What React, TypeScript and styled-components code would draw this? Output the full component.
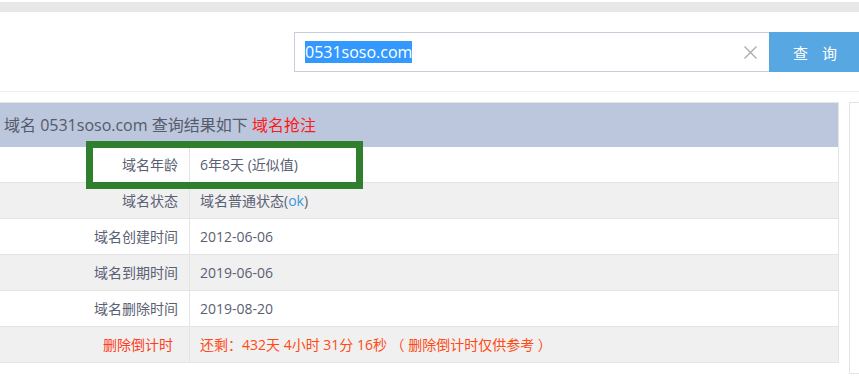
import React from "react";
import styled, { createGlobalStyle } from "styled-components";

const GlobalStyle = createGlobalStyle`
  html, body {
    margin: 0;
    padding: 0;
    background: #ffffff;
  }
  body {
    font-family: "Open Sans", "Noto Sans CJK SC", "Liberation Sans", sans-serif;
    color: #555;
    overflow: hidden;
  }
`;

const Page = styled.div`
  width: 859px;
  padding-top: 2px;
`;

const TopStrip = styled.div`
  height: 10px;
  background: #e7e7e7;
`;

const SearchBar = styled.div`
  height: 80px;
  box-sizing: border-box;
  padding: 20px 0 20px 294px;
  border-bottom: 1px solid #eeeeee;
  display: flex;
`;

const InputBox = styled.div`
  width: 475px;
  height: 40px;
  box-sizing: border-box;
  border: 1px solid #c8cedb;
  border-right: none;
  display: flex;
  align-items: center;
  padding: 0 12px 0 10px;
  background: #fff;
`;

const InputText = styled.div`
  flex: 1;
  font-size: 16px;
  line-height: 21px;
  color: #333;
`;

const Selected = styled.span`
  background: #3399ff;
  color: #ffffff;
`;

const ClearIcon = styled.svg`
  width: 13px;
  height: 13px;
  flex-shrink: 0;
`;

const SearchButton = styled.button`
  width: 90px;
  height: 40px;
  border: none;
  margin: 0;
  padding: 0 0 0 2px;
  background: #56a7e2;
  color: #ffffff;
  font-family: "Noto Sans CJK SC", sans-serif;
  font-size: 15px;
  display: flex;
  align-items: center;
  justify-content: center;
  gap: 14px;
  cursor: pointer;
`;

const Content = styled.div`
  margin-top: 10px;
  display: flex;
  align-items: flex-start;
  gap: 10px;
`;

const TableWrap = styled.div`
  position: relative;
  width: 839px;
  flex-shrink: 0;
  box-sizing: border-box;
  border-top: 1px solid #e4e4e4;
  border-right: 1px solid #e4e4e4;
`;

const Header = styled.div`
  height: 44px;
  line-height: 44px;
  background: #bcc6dd;
  padding-left: 4px;
  font-size: 16px;
  color: #555b6b;
  white-space: nowrap;
`;

const Red = styled.span`
  color: #ff1a1a;
`;

const Row = styled.div<{ $alt?: boolean }>`
  display: grid;
  grid-template-columns: 190px 1fr;
  height: 36px;
  box-sizing: border-box;
  border-bottom: 1px solid #e4e4e4;
  background: ${(p) => (p.$alt ? "#f0f0f0" : "#ffffff")};
  font-size: 14px;
`;

const Label = styled.div<{ $warn?: boolean }>`
  border-right: 1px solid #e4e4e4;
  text-align: right;
  padding-right: ${(p) => (p.$warn ? "16px" : "11px")};
  line-height: 35px;
  color: ${(p) => (p.$warn ? "#ff3d1f" : "#5a6072")};
`;

const Value = styled.div<{ $warn?: boolean }>`
  padding-left: 10px;
  line-height: 35px;
  white-space: nowrap;
  color: ${(p) => (p.$warn ? "#ff4a14" : "#5a6072")};
`;

const Link = styled.span`
  color: #3b96dc;
`;

const Highlight = styled.div`
  position: absolute;
  left: 86px;
  top: 38px;
  width: 277px;
  height: 48px;
  box-sizing: border-box;
  border: 7px solid #2f7f2f;
  pointer-events: none;
`;

const SidePanel = styled.div`
  flex: 1;
  height: 272px;
  box-sizing: border-box;
  border: 1px solid #e4e4e4;
  border-right: none;
`;

const rows: { label: string; value: React.ReactNode; warn?: boolean }[] = [
  { label: "域名年龄", value: "6年8天 (近似值)" },
  {
    label: "域名状态",
    value: (
      <>
        域名普通状态(<Link>ok</Link>)
      </>
    ),
  },
  { label: "域名创建时间", value: "2012-06-06" },
  { label: "域名到期时间", value: "2019-06-06" },
  { label: "域名删除时间", value: "2019-08-20" },
  {
    label: "删除倒计时",
    value: "还剩：432天 4小时 31分 16秒 （ 删除倒计时仅供参考 ）",
    warn: true,
  },
];

export default function App() {
  return (
    <>
      <GlobalStyle />
      <Page>
        <TopStrip />
        <SearchBar>
          <InputBox>
            <InputText>
              <Selected>0531soso.com</Selected>
            </InputText>
            <ClearIcon viewBox="0 0 13 13">
              <path d="M0.5 0.5 L12.5 12.5 M12.5 0.5 L0.5 12.5" stroke="#a8a8a8" strokeWidth="1.2" fill="none" />
            </ClearIcon>
          </InputBox>
          <SearchButton>
            <span>查</span>
            <span>询</span>
          </SearchButton>
        </SearchBar>
        <Content>
          <TableWrap>
            <Header>
              域名 0531soso.com 查询结果如下 <Red>域名抢注</Red>
            </Header>
            {rows.map((r, i) => (
              <Row key={r.label} $alt={i % 2 === 1}>
                <Label $warn={r.warn}>{r.label}</Label>
                <Value $warn={r.warn}>{r.value}</Value>
              </Row>
            ))}
            <Highlight />
          </TableWrap>
          <SidePanel />
        </Content>
      </Page>
    </>
  );
}
